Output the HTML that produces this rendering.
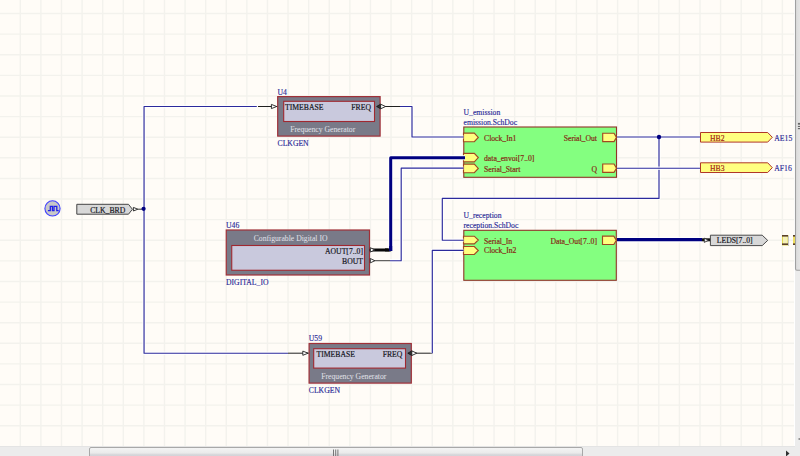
<!DOCTYPE html>
<html><head><meta charset="utf-8">
<style>
html,body{margin:0;padding:0;width:800px;height:456px;overflow:hidden;background:#ececec;}
svg{display:block;}
text{font-family:"Liberation Serif",serif;font-size:7.7px;}
.lbl{fill:#2c2c98;stroke:#2c2c98;stroke-width:0.15px;}
.pin{fill:#141420;stroke:#141420;stroke-width:0.18px;}
.ent{fill:#862a16;stroke:#862a16;stroke-width:0.2px;}
.prt{fill:#a02414;stroke:#a02414;stroke-width:0.15px;}
.wht{fill:#e2e2ea;}
</style></head><body>
<svg width="800" height="456" viewBox="0 0 800 456">

<rect x="0" y="0" width="795" height="446" fill="#fffcf7"/>
<path d="M20.30 0V446 M40.90 0V446 M61.49 0V446 M82.09 0V446 M102.69 0V446 M123.29 0V446 M143.88 0V446 M164.48 0V446 M185.08 0V446 M205.67 0V446 M226.27 0V446 M246.87 0V446 M267.46 0V446 M288.06 0V446 M308.66 0V446 M329.26 0V446 M349.85 0V446 M370.45 0V446 M391.05 0V446 M411.64 0V446 M432.24 0V446 M452.84 0V446 M473.43 0V446 M494.03 0V446 M514.63 0V446 M535.23 0V446 M555.82 0V446 M576.42 0V446 M597.02 0V446 M617.61 0V446 M638.21 0V446 M658.81 0V446 M679.40 0V446 M700.00 0V446 M720.60 0V446 M741.20 0V446 M761.79 0V446 M782.39 0V446 M0 13.55H795 M0 34.16H795 M0 54.77H795 M0 75.38H795 M0 95.99H795 M0 116.60H795 M0 137.21H795 M0 157.82H795 M0 178.43H795 M0 199.04H795 M0 219.65H795 M0 240.26H795 M0 260.87H795 M0 281.48H795 M0 302.09H795 M0 322.70H795 M0 343.31H795 M0 363.92H795 M0 384.53H795 M0 405.14H795 M0 425.75H795" stroke="#f3f2ed" stroke-width="1.4" fill="none"/>
<rect x="794" y="0" width="1" height="446" fill="#ffffff"/>
<rect x="795" y="0" width="5" height="456" fill="#ececec"/>
<defs><linearGradient id="vthumb" x1="0" y1="0" x2="1" y2="0"><stop offset="0" stop-color="#dadada"/><stop offset="1" stop-color="#f0f0f0"/></linearGradient></defs>
<rect x="795.5" y="-20" width="10" height="290.3" rx="1.5" fill="url(#vthumb)" stroke="#a0a0a0" stroke-width="1.1"/>
<rect x="0" y="446" width="795" height="10" fill="#ececec"/>
<rect x="0" y="446" width="795" height="1" fill="#e4e4e4"/>
<rect x="798.5" y="438.3" width="1.5" height="1.4" fill="#707070"/>
<defs><linearGradient id="thumb" x1="0" y1="0" x2="0" y2="1"><stop offset="0" stop-color="#f4f4f4"/><stop offset="0.45" stop-color="#ebebeb"/><stop offset="0.6" stop-color="#d6d6da"/><stop offset="1" stop-color="#cdcdd2"/></linearGradient></defs>
<rect x="89.5" y="447.5" width="493" height="12" rx="1.5" fill="url(#thumb)" stroke="#a8a8a8" stroke-width="1"/>
<path d="M333.5 449.5V456M335.7 449.5V456M337.9 449.5V456" stroke="#6a6a6a" stroke-width="0.9"/>
<path d="M786 450.5L789.5 453.5L786 456.5Z" fill="#303030"/>
<circle cx="52.5" cy="208.4" r="7.6" fill="#c8c8c8" stroke="#4040ff" stroke-width="1.1"/>
<path d="M47.9 210.6H50.3V206.4H52.4V210.6H54V206.4H56.8V210.6H58.7" fill="none" stroke="#2020e8" stroke-width="1.3"/>
<path d="M76.8 204.3H128.5L132.4 209.25L128.5 214.2H76.8Z" fill="#d8d8d8" stroke="#454545" stroke-width="1"/>
<text x="90.2" y="212.8" class="pin" text-anchor="start" >CLK_BRD</text>
<path d="M133.4 207.4L137.8 209.2L133.4 211Z" fill="#ffffff" stroke="#202020" stroke-width="0.9"/>
<rect x="277.7" y="96.6" width="102.40000000000003" height="39.5" fill="#797a88" stroke="#a03038" stroke-width="1.2"/>
<rect x="283.7" y="101.3" width="90.80000000000001" height="20.200000000000003" fill="#c9c9dd" stroke="#a02830" stroke-width="1.1"/>
<path d="M258 106.5H277.2" stroke="#202020" stroke-width="1"/>
<path d="M271.4 104.4L276.7 106.5L271.4 108.6Z" fill="#ffffff" stroke="#202020" stroke-width="0.9"/>
<path d="M380.6 106.5H400" stroke="#202020" stroke-width="1"/>
<path d="M376.6 106.5L380.6 104.2V108.8Z" fill="#303030" stroke="#101010" stroke-width="0.8"/>
<path d="M380.6 104.2L385.6 106.5L380.6 108.8Z" fill="#ffffff" stroke="#202020" stroke-width="0.9"/>
<text x="277.5" y="94.5" class="lbl" text-anchor="start" >U4</text>
<text x="277.5" y="146" class="lbl" text-anchor="start" >CLKGEN</text>
<text x="285" y="109.5" class="pin" text-anchor="start" >TIMEBASE</text>
<text x="371" y="109.5" class="pin" text-anchor="end" >FREQ</text>
<text x="322.7" y="131.5" class="wht" text-anchor="middle" >Frequency Generator</text>
<rect x="309.1" y="343.5" width="102.19999999999999" height="39.60000000000002" fill="#797a88" stroke="#a03038" stroke-width="1.2"/>
<rect x="313.7" y="348.7" width="91.80000000000001" height="19.400000000000034" fill="#c9c9dd" stroke="#a02830" stroke-width="1.1"/>
<path d="M288 353.2H308.6" stroke="#202020" stroke-width="1"/>
<path d="M302.8 351.09999999999997L308.1 353.2L302.8 355.3Z" fill="#ffffff" stroke="#202020" stroke-width="0.9"/>
<path d="M411.8 353.2H432.3" stroke="#202020" stroke-width="1"/>
<path d="M407.8 353.2L411.8 350.9V355.5Z" fill="#303030" stroke="#101010" stroke-width="0.8"/>
<path d="M411.8 350.9L416.8 353.2L411.8 355.5Z" fill="#ffffff" stroke="#202020" stroke-width="0.9"/>
<text x="308.8" y="341.2" class="lbl" text-anchor="start" >U59</text>
<text x="308.8" y="392.8" class="lbl" text-anchor="start" >CLKGEN</text>
<text x="316.5" y="357" class="pin" text-anchor="start" >TIMEBASE</text>
<text x="402.3" y="357" class="pin" text-anchor="end" >FREQ</text>
<text x="353.8" y="379.3" class="wht" text-anchor="middle" >Frequency Generator</text>
<rect x="226.25" y="230.0" width="143.25" height="45.0" fill="#797a88" stroke="#a03038" stroke-width="1.2"/>
<rect x="231.75" y="245.5" width="132.75" height="24.75" fill="#c9c9dd" stroke="#a02830" stroke-width="1.1"/>
<path d="M371 249.9H390.0" stroke="#080808" stroke-width="3" stroke-linecap="round"/>
<path d="M370.3 247.70000000000002L374.8 249.9L370.3 252.1Z" fill="#ffffff" stroke="#202020" stroke-width="0.9"/>
<path d="M370 260.7H390" stroke="#404040" stroke-width="1"/>
<path d="M370.3 258.5L374.8 260.7L370.3 262.9Z" fill="#ffffff" stroke="#202020" stroke-width="0.9"/>
<text x="226" y="227.5" class="lbl" text-anchor="start" >U46</text>
<text x="226" y="285" class="lbl" text-anchor="start" >DIGITAL_IO</text>
<text x="290.6" y="240.8" class="wht" text-anchor="middle" >Configurable Digital IO</text>
<text x="363" y="253.6" class="pin" text-anchor="end" >AOUT[7..0]</text>
<text x="363" y="263.9" class="pin" text-anchor="end" >BOUT</text>
<rect x="463.8" y="127.0" width="152.7" height="50.30000000000001" fill="#84ff80" stroke="#903428" stroke-width="1.1"/>
<path d="M463.5 133.1H474.3L478.3 137.4L474.3 141.70000000000002H463.5Z" fill="#ffff80" stroke="#a04820" stroke-width="1.15"/>
<path d="M463.5 153.29999999999998H474.3L478.3 157.6L474.3 161.9H463.5Z" fill="#ffff80" stroke="#a04820" stroke-width="1.15"/>
<path d="M463.5 164.1H474.3L478.3 168.4L474.3 172.70000000000002H463.5Z" fill="#ffff80" stroke="#a04820" stroke-width="1.15"/>
<path d="M602.7 133.20000000000002H614.0L616.5 137.4L614.0 141.6H602.7Z" fill="#ffff80" stroke="#a04820" stroke-width="1.15"/>
<path d="M602.7 164.0H614.0L616.5 168.2L614.0 172.39999999999998H602.7Z" fill="#ffff80" stroke="#a04820" stroke-width="1.15"/>
<text x="463.5" y="114.8" class="lbl" text-anchor="start" >U_emission</text>
<text x="463.5" y="124.5" class="lbl" text-anchor="start" >emission.SchDoc</text>
<text x="484" y="141" class="ent" text-anchor="start" >Clock_In1</text>
<text x="484" y="161" class="ent" text-anchor="start" >data_envoi[7..0]</text>
<text x="484" y="171.6" class="ent" text-anchor="start" >Serial_Start</text>
<text x="597" y="141" class="ent" text-anchor="end" >Serial_Out</text>
<text x="597" y="171.5" class="ent" text-anchor="end" >Q</text>
<rect x="463.8" y="230.3" width="152.49999999999994" height="50.0" fill="#84ff80" stroke="#903428" stroke-width="1.1"/>
<path d="M463.5 236.2H474.3L478.3 240.0L474.3 243.8H463.5Z" fill="#ffff80" stroke="#a04820" stroke-width="1.15"/>
<path d="M463.5 246.5H474.3L478.3 250.5L474.3 254.5H463.5Z" fill="#ffff80" stroke="#a04820" stroke-width="1.15"/>
<path d="M602.5 236.10000000000002H613.8L616.3 240.3L613.8 244.5H602.5Z" fill="#ffff80" stroke="#a04820" stroke-width="1.15"/>
<text x="463.5" y="217.9" class="lbl" text-anchor="start" >U_reception</text>
<text x="463.5" y="227.9" class="lbl" text-anchor="start" >reception.SchDoc</text>
<text x="484" y="243.6" class="ent" text-anchor="start" >Serial_In</text>
<text x="484" y="253.4" class="ent" text-anchor="start" >Clock_In2</text>
<text x="597" y="244" class="ent" text-anchor="end" >Data_Out[7..0]</text>
<path d="M700.5 132.5H767.7L772.3 137.3L767.7 142.1H700.5Z" fill="#ffff80" stroke="#b03828" stroke-width="1"/>
<text x="710" y="140.8" class="prt" text-anchor="start" >HB2</text>
<text x="774.3" y="140.7" class="lbl" text-anchor="start" >AE15</text>
<path d="M700.5 162.8H767.7L772.3 167.65L767.7 172.5H700.5Z" fill="#ffff80" stroke="#b03828" stroke-width="1"/>
<text x="710" y="171" class="prt" text-anchor="start" >HB3</text>
<text x="774.3" y="171" class="lbl" text-anchor="start" >AF16</text>
<path d="M701.5 239.8H710.6" stroke="#101010" stroke-width="3"/>
<path d="M704.3 238.2L708.6 240.2L704.3 242.4Z" fill="#f0f0f0" stroke="#202020" stroke-width="0.8"/>
<path d="M710.4 235.2H762.2L767.7 240.39999999999998L762.2 245.6H710.4Z" fill="#d8d8d8" stroke="#4a4a4a" stroke-width="1"/>
<text x="716.8" y="243.4" class="pin" text-anchor="start" >LEDS[7..0]</text>
<path d="M256.8 106.5H144.05V353.2H288" stroke="#ffffff" stroke-opacity="0.8" stroke-width="3.35" fill="none" stroke-linejoin="round"/>
<path d="M256.8 106.5H144.05V353.2H288" stroke="#2c2a9c" stroke-width="1.15" fill="none" stroke-linejoin="round"/>
<path d="M137.6 209.2H142" stroke="#202020" stroke-width="0.9"/>
<path d="M400 106.5H412V137H463.5" stroke="#ffffff" stroke-opacity="0.8" stroke-width="3.35" fill="none" stroke-linejoin="round"/>
<path d="M400 106.5H412V137H463.5" stroke="#2c2a9c" stroke-width="1.15" fill="none" stroke-linejoin="round"/>
<path d="M617 137H700" stroke="#ffffff" stroke-opacity="0.8" stroke-width="3.35" fill="none" stroke-linejoin="round"/>
<path d="M617 137H700" stroke="#2c2a9c" stroke-width="1.15" fill="none" stroke-linejoin="round"/>
<path d="M659 137V198.4H442.3V240.2H463.5" stroke="#ffffff" stroke-opacity="0.8" stroke-width="3.35" fill="none" stroke-linejoin="round"/>
<path d="M659 137V198.4H442.3V240.2H463.5" stroke="#2c2a9c" stroke-width="1.15" fill="none" stroke-linejoin="round"/>
<path d="M617 168.2H700" stroke="#ffffff" stroke-opacity="0.8" stroke-width="3.35" fill="none" stroke-linejoin="round"/>
<path d="M617 168.2H700" stroke="#2c2a9c" stroke-width="1.15" fill="none" stroke-linejoin="round"/>
<path d="M390 260.7H401.2V168.1H463.5" stroke="#ffffff" stroke-opacity="0.8" stroke-width="3.35" fill="none" stroke-linejoin="round"/>
<path d="M390 260.7H401.2V168.1H463.5" stroke="#2c2a9c" stroke-width="1.15" fill="none" stroke-linejoin="round"/>
<path d="M463.5 250.4H432.3V353.2" stroke="#ffffff" stroke-opacity="0.8" stroke-width="3.35" fill="none" stroke-linejoin="round"/>
<path d="M463.5 250.4H432.3V353.2" stroke="#2c2a9c" stroke-width="1.15" fill="none" stroke-linejoin="round"/>
<path d="M390.7 251V157.7H465" stroke="#ffffff" stroke-opacity="0.8" stroke-width="5.2" fill="none" stroke-linejoin="round"/>
<path d="M390.7 251V157.7H465" stroke="#000080" stroke-width="3.0" fill="none" stroke-linejoin="round"/>
<path d="M617 239.7H702" stroke="#ffffff" stroke-opacity="0.8" stroke-width="5.4" fill="none" stroke-linejoin="round"/>
<path d="M617 239.7H702" stroke="#000080" stroke-width="3.2" fill="none" stroke-linejoin="round"/>
<circle cx="143.6" cy="208.8" r="2.1" fill="#000080"/>
<circle cx="659" cy="137" r="2.2" fill="#000080"/>
<path d="M385 249.9H389.4" stroke="#080808" stroke-width="3"/>
<path d="M390.7 251V246" stroke="#000080" stroke-width="3"/>
<rect x="782.5" y="235.5" width="5.5" height="9.5" fill="#f4f0b8" stroke="#e0d850" stroke-width="1"/>
<rect x="782" y="235" width="6" height="1.6" fill="#5a4028"/><rect x="782" y="243.4" width="6" height="1.6" fill="#5a4028"/>
<rect x="793" y="235" width="2" height="10" fill="#f0e060"/><rect x="793" y="235" width="2" height="1.6" fill="#5a4028"/><rect x="793" y="243.4" width="2" height="1.6" fill="#5a4028"/>
<rect x="788" y="236" width="1" height="10" fill="#c4c4c4"/>
<rect x="797.9" y="122.9" width="3" height="1.8" fill="#686868"/><rect x="797.9" y="125.9" width="3" height="1.1" fill="#686868"/><rect x="797.9" y="128" width="3" height="1.2" fill="#686868"/>
</svg></body></html>
